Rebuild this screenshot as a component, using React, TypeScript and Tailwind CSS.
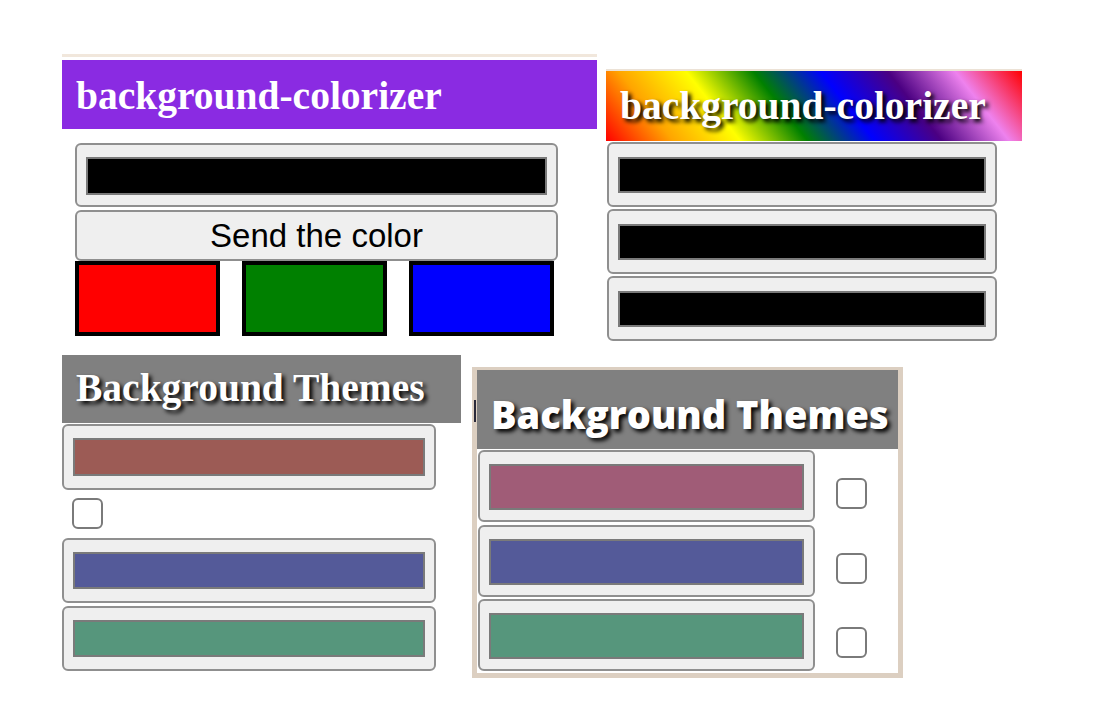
import React from "react";

function ColorInput({ w, h, color = "#000", pt = 13, pb = 13 }: { w: number; h: number; color?: string; pt?: number; pb?: number }) {
  return (
    <div
      className="box-border shrink-0 rounded-[6px] border-2 border-[#8f8f8f] bg-[#efefef] px-[9px]"
      style={{ width: w, height: h, paddingTop: pt, paddingBottom: pb }}
    >
      <div className="h-full w-full border-2 border-[#7a7a7a]" style={{ backgroundColor: color }} />
    </div>
  );
}

function Checkbox() {
  return <div className="box-border h-[31px] w-[31px] rounded-[6px] border-[2.5px] border-[#7a7a7a] bg-white" />;
}

export default function App() {
  const serif = "font-['Liberation_Serif','Times_New_Roman',serif]";
  return (
    <div className="h-[704px] w-[1107px] overflow-hidden bg-white font-['Liberation_Sans',Arial,sans-serif]">
      {/* Row 1 */}
      <div className="flex items-start pl-[62px] pt-[54px]">
        {/* Panel 1 */}
        <div className="flex w-[535px] flex-col">
          <div className="h-[3px] bg-[#f1e7dc]" />
          <div className="h-[3px]" />
          <div className={`flex h-[69px] items-center bg-[#8a2be2] pl-[14px] pt-[5px] text-[39.5px] font-bold text-white ${serif}`}>
            background-colorizer
          </div>
          <div className="mt-[14px] flex flex-col pl-[13px]">
            <ColorInput w={483} h={64} pt={12} pb={10} />
            <div className="mt-[3px] box-border flex h-[51px] w-[483px] items-center justify-center rounded-[6px] border-2 border-[#8f8f8f] bg-[#efefef] text-[33px] text-black">
              Send the color
            </div>
            <div className="flex h-[75px] w-[479px] justify-between">
              <div className="box-border h-[75px] w-[145px] border-[4px] border-black bg-[#ff0000]" />
              <div className="box-border h-[75px] w-[145px] border-[4px] border-black bg-[#008000]" />
              <div className="box-border h-[75px] w-[145px] border-[4px] border-black bg-[#0000ff]" />
            </div>
          </div>
        </div>
        {/* Panel 2 */}
        <div className="ml-[9px] mt-[15px] flex w-[416px] flex-col">
          <div className="h-[2px] bg-[#ece2d6]" />
          <div
            className={`flex h-[70px] items-center bg-[linear-gradient(52deg,red,orange,yellow,green,blue,indigo,violet,red)] pl-[14px] pt-[2px] text-[39.5px] font-bold text-white [text-shadow:3px_3px_4px_#000] ${serif}`}
          >
            background-colorizer
          </div>
          <div className="ml-[1px] mt-[1px] flex flex-col gap-[2px]">
            <ColorInput w={390} h={65} pt={13} pb={12} />
            <ColorInput w={390} h={65} pt={13} pb={12} />
            <ColorInput w={390} h={65} pt={13} pb={12} />
          </div>
        </div>
      </div>

      {/* Row 2 */}
      <div className="mt-[14px] flex items-start pl-[62px]">
        {/* Panel 3 */}
        <div className="flex w-[399px] flex-col">
          <div className={`flex h-[68px] items-center bg-[#808080] pl-[14px] text-[39.5px] font-bold text-white [text-shadow:3px_3px_4px_#000] ${serif}`}>
            Background Themes
          </div>
          <div className="mt-[1px]">
            <ColorInput w={374} h={66} color="#9c5b55" pt={12} pb={12} />
          </div>
          <div className="ml-[10px] mt-[8px]">
            <Checkbox />
          </div>
          <div className="mt-[9px]">
            <ColorInput w={374} h={65} color="#545a99" pt={12} pb={12} />
          </div>
          <div className="mt-[3px]">
            <ColorInput w={374} h={65} color="#56967c" pt={12} pb={12} />
          </div>
        </div>
        {/* Panel 4 */}
        <div className="relative ml-[11px] mt-[12px] box-border h-[311px] w-[431px] bg-[#dccfc1] pb-[5px] pl-[5px] pr-[5px] pt-[3px]">
          <div className="absolute left-[2px] top-[33px] h-[22px] w-[2px] bg-[#2a2a3a]" />
          <div className="flex h-full flex-col bg-white">
            <div className="flex h-[79px] items-center whitespace-nowrap bg-[#808080] pl-[14px] pt-[9px] font-['Open_Sans',sans-serif] text-[38px] font-extrabold text-white [text-shadow:3px_3px_4px_#000]">
              Background Themes
            </div>
            {[
              { c: "#a05c77", mt: 1 },
              { c: "#545a99", mt: 3 },
              { c: "#56967c", mt: 2 },
            ].map((r, i) => (
              <div key={i} className="flex items-start" style={{ marginTop: r.mt }}>
                <div className="ml-[1px]">
                  <ColorInput w={337} h={72} color={r.c} pt={12} pb={10} />
                </div>
                <div className="ml-[21px] mt-[28px]">
                  <Checkbox />
                </div>
              </div>
            ))}
          </div>
        </div>
      </div>
    </div>
  );
}
